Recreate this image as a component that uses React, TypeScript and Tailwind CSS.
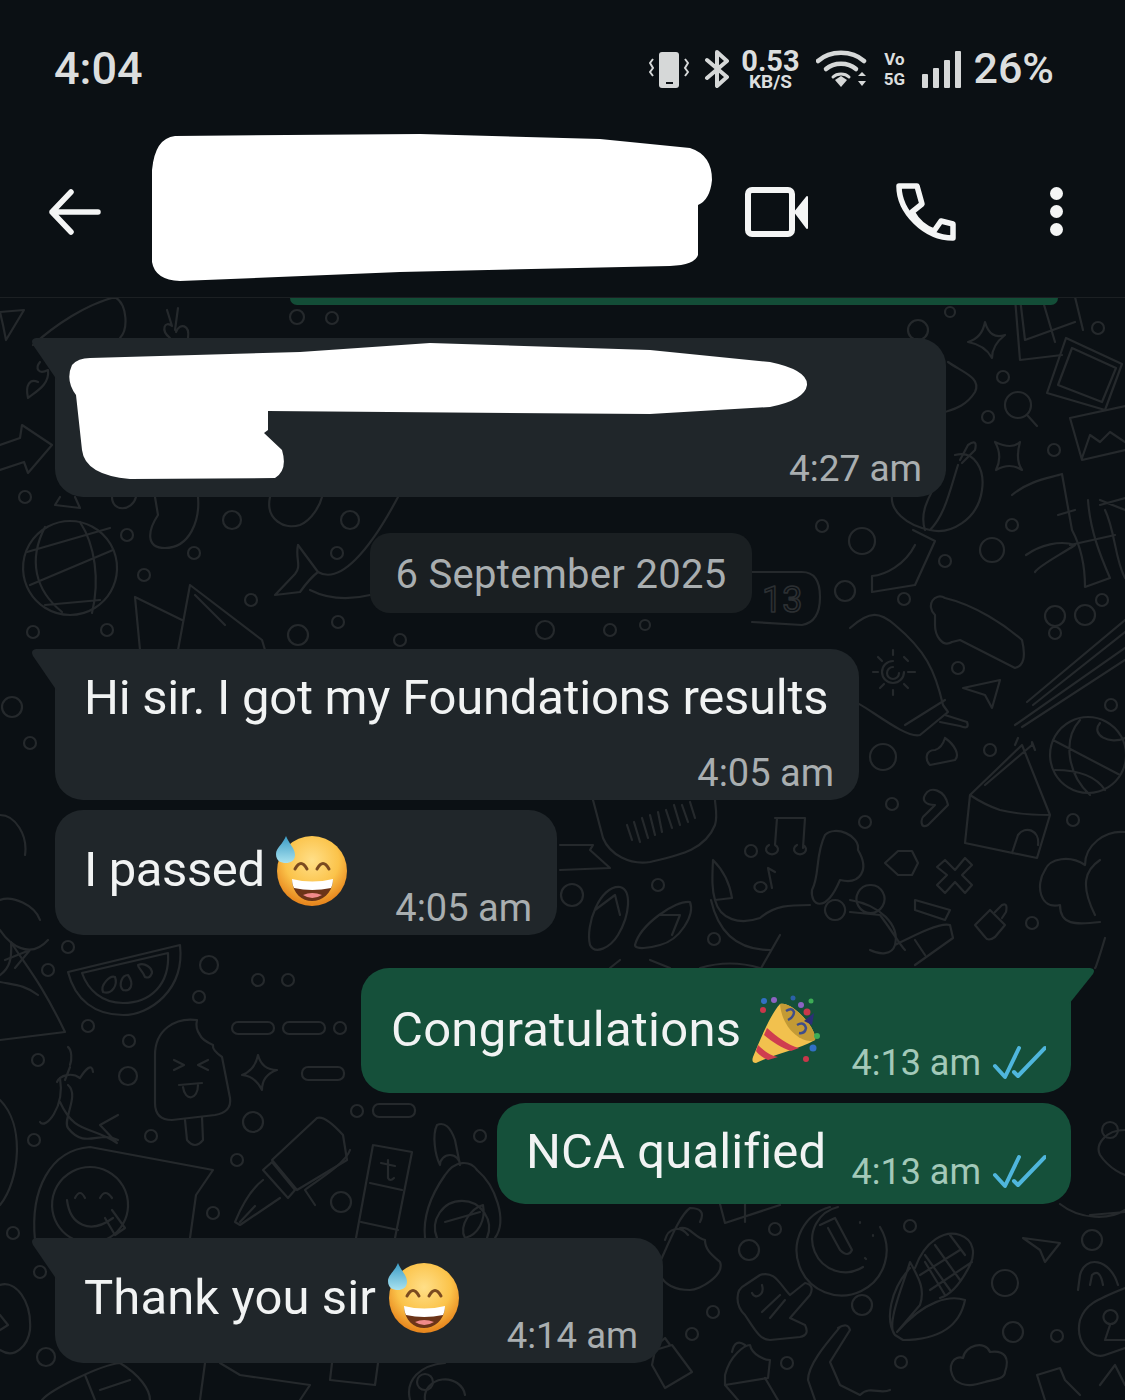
const dots: [number, number, number][] = [
  [297, 317, 7], [332, 318, 6], [25, 497, 6], [232, 520, 9], [127, 535, 6], [194, 553, 6], [350, 520, 9], [337, 553, 6],
  [144, 575, 6], [251, 600, 6], [338, 622, 6], [298, 635, 10], [33, 632, 6], [107, 630, 6], [12, 707, 10], [30, 743, 6],
  [950, 312, 5], [918, 330, 10], [1003, 377, 6], [988, 417, 6], [1098, 328, 6], [1054, 450, 6], [822, 526, 6], [862, 541, 13],
  [1012, 525, 6], [992, 550, 12], [945, 561, 6], [845, 591, 10], [904, 599, 6], [1085, 615, 10], [883, 757, 13], [958, 668, 6],
  [990, 750, 6], [892, 804, 6], [865, 822, 6], [1073, 820, 6], [1032, 923, 6], [1055, 616, 10], [1055, 633, 6], [1111, 705, 6],
  [751, 851, 6], [658, 885, 6], [572, 895, 11], [714, 939, 6], [68, 947, 6], [48, 970, 6], [209, 965, 9], [199, 997, 6],
  [258, 980, 6], [288, 980, 6], [88, 1026, 6], [129, 1041, 6], [38, 1060, 6], [128, 1076, 9], [340, 1028, 6], [151, 1136, 6],
  [34, 1140, 6], [253, 1122, 10], [237, 1160, 6], [213, 1213, 6], [341, 1202, 10], [318, 1250, 6], [749, 1250, 10], [775, 1229, 6],
  [910, 1226, 6], [1005, 1283, 13], [1092, 1240, 10], [1013, 1332, 10], [1057, 1336, 6], [862, 1305, 10], [713, 1312, 6], [692, 1334, 6],
  [787, 1363, 6], [901, 1362, 6], [13, 1233, 6], [40, 1272, 6], [46, 1357, 9], [357, 1111, 6], [480, 1136, 6], [425, 1382, 8],
  [1102, 600, 6], [610, 630, 6], [545, 630, 9], [645, 625, 5], [400, 640, 6], [1000, 980, 5], [1110, 1130, 8],
];

const lines: string[] = [
  // top left
  "M0,312 L24,310 L6,340 L3,325 Z",
  "M33,345 C55,325 85,305 115,297 C128,305 128,330 120,338",
  "M170,338 C160,330 165,320 172,326 L167,310 M175,330 L178,308 M188,338 C190,325 180,322 176,332",
  "M28,398 C35,392 50,385 48,370 C38,375 35,368 40,362 M28,398 C25,385 30,378 38,382",
  "M0,445 L20,438 L22,425 L52,445 L28,473 L24,462 L0,470",
  "M60,497 L55,505 L80,508 L75,497 M112,497 C112,512 132,512 136,497",
  "M155,497 L158,515 C148,530 145,548 165,548 C190,548 200,520 198,497",
  "M270,497 C265,520 285,530 300,525 C312,520 320,505 322,497",
  // globe
  "M70,521 a47,47 0 1,0 0.1,0 Z",
  "M45,527 C28,560 35,590 62,612 M80,522 C95,545 100,580 92,613 M27,552 L110,528 M30,585 L113,550 M45,605 L100,600",
  // tent + whale
  "M135,597 L182,620 M135,597 L140,650 M190,585 L178,650 M190,585 L262,640 L265,650 M195,595 L225,625",
  "M298,545 C295,558 302,566 295,574 L275,595 L300,592 C305,585 310,578 318,572 C340,585 370,550 398,497",
  "M298,545 L318,572 M310,590 C330,600 350,600 370,595",
  // lantern + right top
  "M955,455 C975,450 985,470 982,490 C978,520 950,535 930,530 C905,525 890,510 892,495",
  "M945,470 C925,500 920,515 925,530 M958,465 C950,490 945,515 930,530 M960,460 L968,445 Q978,438 975,450 L962,463",
  "M913,530 L935,541 L915,585 L872,592 L872,576 C885,575 905,565 915,545",
  "M948,362 C962,372 982,378 975,392 C965,408 950,410 945,412",
  "M985,322 Q990,340 1005,335 Q992,345 992,358 Q985,345 968,342 Q982,338 985,322",
  "M1015,298 L1020,360 L1062,355 M1042,298 L1055,342 M1020,298 L1025,340 L1075,322 M1075,297 L1083,330",
  "M1047,393 L1066,338 L1122,364 L1105,410 Z M1058,385 L1072,348 L1116,368 L1102,402 Z",
  "M1070,418 L1125,406 M1070,418 L1082,460 L1125,450 M1082,458 L1090,435 L1100,442 L1110,432 L1125,442",
  "M1018,392 m-13,13 a13,13 0 1,0 26,0 a13,13 0 1,0 -26,0 M1028,416 L1037,426",
  "M995,442 Q1012,450 1020,442 Q1015,460 1022,470 Q1010,462 996,470 Q1003,456 995,442",
  // bamboo
  "M1012,495 C1030,480 1050,478 1062,474 L1072,530 C1080,545 1085,565 1085,587 L1110,578 C1100,555 1090,530 1088,500",
  "M1026,555 C1040,545 1060,540 1075,545 C1060,555 1040,565 1035,572 M1058,515 L1075,510 M1070,545 L1115,535",
  "M1100,505 L1125,498 M1105,510 C1115,530 1115,560 1125,578 M1100,500 L1125,510",
  // middle right
  "M850,628 C870,610 880,612 895,625 C925,650 935,670 943,705 L948,712 L920,735 C905,740 860,700 850,700",
  "M905,725 L945,700 M945,715 L967,722 Q970,730 960,726 L940,722",
  "M893,661 a11,11 0 1,0 11,11 M893,667 a6,6 0 1,0 6,6 M893,650 L893,655 M893,690 L893,695 M873,672 L878,672 M908,672 L915,672 M878,657 L882,661 M904,657 L908,661 M880,688 L884,684 M904,684 L908,688",
  "M963,688 L1000,680 L992,708 L985,695 Z",
  "M935,615 C925,605 935,592 945,598 C975,605 1005,625 1022,640 Q1028,665 1015,668 L960,640 L952,642 C942,648 935,635 935,625 Z",
  "M1027,702 L1125,620 M1033,705 L1125,632 M1015,725 L1125,648 M1022,727 L1125,660",
  "M1088,717 a38,38 0 1,0 0.1,0 Z M1053,740 L1120,775 M1080,720 C1062,740 1068,775 1090,795 M1100,723 C1090,735 1110,745 1125,738 M1055,770 C1075,770 1095,775 1105,790",
  "M945,738 C955,745 960,755 955,760 L930,765 C925,760 925,750 935,750 Q942,748 945,738",
  "M925,795 C930,785 945,790 948,805 L928,825 C920,830 920,818 925,815 L935,805 C925,805 922,800 925,795",
  "M970,795 L1022,745 L1050,815 L1037,858 L965,843 L970,795 M985,785 L1032,745 M1012,853 L1018,835 C1025,825 1040,830 1038,845 M1015,745 L1018,738 M1032,745 L1032,742 L1035,750 M970,795 Q985,805 1000,810 Q1020,815 1050,815",
  "M898,851 L912,851 L918,863 L912,875 L898,875 L885,863 Z",
  "M945,860 L955,870 L965,858 L972,865 L962,875 L972,885 L965,893 L955,882 L945,893 L937,885 L947,875 L937,867 Z",
  "M975,925 L990,910 L1005,925 L995,937 Q988,942 985,937 Z M995,912 L1002,905 Q1008,902 1006,912 L1002,918",
  "M1060,905 C1040,910 1035,885 1045,870 C1050,858 1070,855 1085,865 C1085,845 1105,830 1125,832 M1100,860 C1085,870 1080,885 1095,915 M1060,905 C1060,925 1075,925 1100,922 M1105,938 C1100,955 1095,970 1095,968",
  "M850,900 C880,905 900,925 895,945 C892,955 880,955 870,950 M915,900 L950,910 L945,920 L915,910 Z M895,945 C915,935 940,922 950,925 L953,938 L915,965 M915,940 L925,955",
  // speech bubble + notes
  "M593,800 L603,838 C610,855 630,865 650,862 C680,855 705,850 715,825 C718,815 715,805 715,800 M560,845 L593,845 L590,850 L610,868 L560,870",
  "M627,825 L632,840 M634,822 L640,842 M642,818 L648,838 M650,815 L655,835 M658,812 L662,832 M666,810 L672,828 M674,805 L680,825 M682,805 L688,822 M690,802 L695,818",
  "M590,945 C585,925 600,885 620,887 C632,890 630,915 618,935 C610,948 595,955 590,945 M595,910 L615,895 L620,915",
  "M635,945 C640,925 675,900 690,902 C695,915 680,940 660,945 C650,948 635,950 635,945 M660,915 L680,915 L672,935",
  "M775,818 L805,818 L803,848 M777,818 L775,845 M775,845 a6,5 0 1,1 -6,-0 M803,845 a6,5 0 1,1 -6,-0",
  "M768,868 L772,888 M768,868 L775,872 M760,892 a6,5 0 1,1 1,0",
  "M713,860 C725,872 730,885 732,898 L715,900 C712,890 712,880 713,860 M715,900 C720,920 740,925 760,918 C775,905 790,905 810,905 M711,900 C720,940 745,950 770,950 M780,935 L760,970",
  "M825,835 C835,825 860,835 858,850 C870,870 860,885 840,880 C825,915 810,905 812,890 C820,875 815,855 825,835 M835,900 a10,10 0 1,0 0.1,0 Z M870,885 a14,14 0 1,0 1,0 M850,912 L880,915 C895,935 900,945 905,950",
  "M650,960 L670,968 M610,968 L620,960 M700,968 C720,962 740,962 760,968",
  // left mid
  "M0,815 C15,815 28,835 25,855 M0,900 C12,895 35,905 40,920 M0,930 C10,945 30,960 48,940 M5,960 L30,950 L15,968",
  // watermelon
  "M68,972 L180,945 C185,990 150,1015 123,1015 C95,1015 75,1000 68,972 M82,973 L168,953 C170,985 150,1003 123,1003 C102,1003 88,990 82,973",
  "M103,992 C100,985 110,975 115,977 C118,985 112,995 103,992 M123,990 C118,985 122,975 128,975 C135,985 130,992 123,990 M145,977 C142,970 138,968 138,965 C145,962 152,968 152,973 C150,978 148,978 145,977",
  "M0,975 C10,968 12,958 11,942 C25,965 40,980 65,1032 L0,1040 M0,982 C15,985 25,985 38,995",
  "M197,1020 C175,1017 155,1030 155,1055 L155,1103 Q155,1120 172,1120 L215,1115 Q232,1112 230,1098 L222,1057 Q212,1050 213,1045 Q202,1040 200,1035 Q195,1028 197,1020",
  "M174,1060 L184,1065 L174,1070 M208,1060 L198,1065 L208,1070 M179,1085 L202,1083 M183,1087 C185,1102 198,1100 198,1085 M185,1120 L187,1140 Q195,1150 203,1140 L202,1117",
  "M258,1055 Q262,1070 277,1070 Q262,1075 262,1090 Q255,1076 242,1075 Q255,1070 258,1055",
  "M60,1078 C65,1108 45,1130 40,1122 M68,1085 C80,1095 62,1120 68,1128 C85,1150 100,1130 118,1140 M60,1102 C75,1135 90,1125 117,1143 L100,1125 L118,1115",
  "M68,1047 C72,1050 72,1060 70,1065 M57,1082 C60,1075 72,1072 80,1078 C85,1070 92,1062 93,1072 M70,1067 L65,1080",
  // pen + smiley
  "M272,1160 L317,1118 Q325,1115 343,1135 L347,1160 L297,1190 Z M263,1170 L272,1162 L295,1190 L288,1198 Z",
  "M263,1180 C250,1190 240,1210 235,1222 L240,1225 L280,1198 M240,1222 L255,1206",
  "M90,1167 a38,38 0 1,0 0.1,0 Z M67,1200 C70,1225 90,1235 113,1218 M75,1198 Q80,1188 85,1198 M100,1198 Q105,1188 112,1198 M105,1218 L115,1235 L125,1228 L112,1210",
  "M35,1240 C30,1190 50,1150 90,1147 L213,1170 L196,1195 L190,1238",
  "M0,1100 C25,1125 20,1180 0,1205 M350,1150 C345,1165 310,1185 305,1190 L315,1205",
  // bookmark + compass
  "M373,1145 L412,1152 L395,1238 M373,1145 L356,1238 M370,1183 L402,1190 M361,1222 L398,1230 M388,1160 L388,1178 Q390,1182 394,1178 M381,1163 L395,1166",
  "M440,1165 C435,1155 432,1135 437,1125 Q448,1120 455,1140 L460,1165 a10,10 0 0,0 -20,0",
  "M425,1238 C422,1210 438,1185 445,1175 M495,1238 C508,1220 495,1185 477,1170 M445,1175 C455,1160 470,1160 477,1170 M437,1238 a27,27 0 1,1 50,0 M465,1238 C458,1225 472,1208 483,1205 C486,1220 478,1235 465,1238",
  "M445,1222 L480,1212",
  // bottom left
  "M0,1285 C15,1280 32,1300 30,1330 C28,1345 15,1360 0,1350 M0,1330 L8,1325 L0,1315",
  "M42,1400 C50,1390 100,1365 120,1363 C140,1375 150,1390 150,1400 M85,1375 L95,1400 M100,1390 L130,1380",
  "M205,1363 L200,1400 M220,1363 L240,1375 L310,1385 L300,1400 M332,1363 L330,1380 L375,1385 L378,1363",
  "M410,1400 C405,1380 420,1365 445,1363 M425,1400 a20,18 0 0,1 40,-5",
  // bottom right
  "M660,1262 C670,1240 680,1215 690,1208 C700,1208 705,1212 700,1222 M665,1240 C668,1228 680,1225 688,1235 M680,1228 C690,1226 695,1238 705,1240 C705,1250 712,1255 720,1262 C725,1275 700,1290 690,1290 C675,1290 665,1285 660,1275",
  "M720,1204 L725,1223 L780,1205 M745,1204 L745,1222",
  "M830,1207 a45,45 0 1,0 50,20 M838,1207 a33,33 0 1,0 25,60 M820,1225 L835,1218 L852,1250 Q848,1258 840,1250 L828,1228 M860,1222 L860,1223 M873,1235 L873,1236 M865,1258 L866,1259",
  "M915,1268 C925,1240 945,1230 960,1235 C975,1240 975,1255 970,1265 C960,1285 950,1295 940,1298 M910,1268 C890,1290 885,1320 895,1335 C885,1325 905,1280 910,1262 C920,1280 925,1290 920,1305 L897,1332 M895,1335 L903,1340 C940,1340 960,1325 965,1300 C950,1295 925,1300 897,1332 M935,1245 L960,1280 M925,1255 L950,1290 M950,1235 L965,1255 M920,1275 L960,1250 M930,1290 L972,1262 M945,1295 L925,1262",
  "M1023,1238 L1060,1243 L1045,1262 L1040,1250 Z",
  "M745,1315 C735,1305 735,1290 745,1285 L760,1275 C775,1270 780,1285 790,1295 L805,1283 Q815,1285 810,1295 L790,1318 L805,1325 Q810,1335 800,1337 L770,1340 C760,1340 755,1330 745,1315",
  "M752,1293 C755,1300 765,1295 762,1285 M762,1312 L780,1295 M770,1318 L785,1300",
  "M725,1375 C730,1355 745,1345 750,1345 C752,1355 765,1360 770,1360 L768,1378 L725,1385 Z M725,1385 L738,1400 M765,1378 L778,1400 M745,1345 Q735,1338 732,1352",
  "M840,1327 C825,1345 808,1365 808,1380 L815,1400 M850,1330 Q848,1322 838,1328 M850,1330 L830,1362 L840,1385 L860,1395 C870,1385 880,1395 890,1390",
  "M655,1350 L672,1345 L692,1372 L665,1388 L652,1365 Z M657,1345 L665,1338 L670,1345",
  "M955,1380 C945,1365 955,1355 963,1358 C965,1345 985,1340 990,1352 C1005,1350 1010,1358 1005,1372 C1005,1380 990,1380 985,1382 C975,1385 965,1388 955,1380",
  "M1037,1375 L1060,1368 L1065,1380 L1080,1395 M1037,1375 L1045,1400",
  "M1080,1320 C1085,1305 1095,1300 1125,1288 M1080,1320 C1075,1340 1090,1360 1105,1355 L1125,1348 M1078,1290 L1080,1275 C1085,1255 1110,1258 1118,1285 M1090,1285 L1092,1275 Q1100,1268 1103,1285 M1110,1310 a7,7 0 1,0 1,0 M1110,1325 L1105,1340 L1125,1340",
  "M1125,1130 C1105,1130 1095,1145 1100,1155 C1110,1170 1125,1175 1125,1175 M1060,1204 C1080,1220 1110,1220 1125,1210 M1090,1215 L1125,1212",
  "M1100,1385 L1115,1365 L1125,1385",
];

function Doodles() {
  return (
    <svg
      className="absolute inset-0"
      width="1125"
      height="1102"
      viewBox="0 298 1125 1102"
      fill="none"
      stroke="#25292c"
      strokeWidth="2.2"
      strokeLinecap="round"
      strokeLinejoin="round"
    >
      {dots.map(([x, y, r], i) => (
        <circle key={i} cx={x} cy={y} r={r} />
      ))}
      {lines.map((d, i) => (
        <path key={i} d={d} />
      ))}
      <rect x="232" y="1022" width="42" height="12" rx="6" />
      <rect x="283" y="1022" width="42" height="12" rx="6" />
      <rect x="302" y="1067" width="42" height="13" rx="6" />
      <rect x="373" y="1104" width="42" height="13" rx="6" />
      <path d="M752,572 h50 q18,0 18,25 q0,25 -18,28 l-50,-3" />
      <text x="762" y="612" fontSize="36" fontFamily="Roboto, sans-serif" fill="none" stroke="#2b2f32" strokeWidth="1.6">
        13
      </text>
    </svg>
  );
}

function SweatSmile({ className }: { className?: string }) {
  return (
    <svg className={className} viewBox="0 0 72 70" fill="none">
      <defs>
        <radialGradient id="face" cx="50%" cy="35%" r="62%">
          <stop offset="0%" stopColor="#ffdf88" />
          <stop offset="62%" stopColor="#fbc34a" />
          <stop offset="100%" stopColor="#e8881f" />
        </radialGradient>
        <linearGradient id="drop" x1="0" y1="0" x2="0" y2="1">
          <stop offset="0%" stopColor="#3a9cc6" />
          <stop offset="100%" stopColor="#a9e2ef" />
        </linearGradient>
      </defs>
      <circle cx="36" cy="35" r="35" fill="url(#face)" />
      <path d="M16,44 Q36,49 57,44 C56,58 46,65 36,65 C26,65 17,58 16,44 Z" fill="#6b3418" />
      <path d="M16,43 Q36,48 57,43 C57,47 56,50 55,52 Q36,56 18,52 C17,50 16,47 16,43 Z" fill="#fff" />
      <path d="M27,59 Q36,55 46,59 Q36,65 27,59 Z" fill="#f08a8a" />
      <path d="M19,33 Q25,22 31,33" stroke="#7a4a20" strokeWidth="3" strokeLinecap="round" />
      <path d="M41,33 Q47,22 53,33" stroke="#7a4a20" strokeWidth="3" strokeLinecap="round" />
      <path d="M10,0 C13,8 19,12 19,19 C19,25 14,27 10,27 C5,27 0,25 0,18 C0,12 7,8 10,0 Z" fill="url(#drop)" />
    </svg>
  );
}

function Popper({ className }: { className?: string }) {
  return (
    <svg className={className} viewBox="0 0 70 70" fill="none">
      <path d="M28,9 C40,5 66,35 63,45 C45,55 20,60 4,68 Q-1,68 1,62 C8,45 18,20 28,9 Z" fill="#f2c14e" />
      <path d="M15,33 C25,42 36,50 47,53 L39,56 C30,53 20,47 12,40 Z" fill="#cf3d4f" />
      <path d="M6,50 C12,56 19,61 26,62 L16,65 C11,63 6,59 4,56 Z" fill="#cf3d4f" />
      <path d="M28,9 C40,5 66,35 63,45 C52,50 30,35 28,9 Z" fill="#c39a35" />
      <path d="M34,16 q6,-4 8,1 q0,5 -6,8 M45,30 q7,-4 9,3 q-1,6 -7,5" stroke="#3f4d8a" strokeWidth="2.5" />
      <path d="M52,26 L62,18 L60,30 Z" fill="#2c2e78" />
      <circle cx="12" cy="6" r="3" fill="#3170c4" />
      <circle cx="22" cy="5" r="3" fill="#8c63c2" />
      <circle cx="11" cy="15" r="3" fill="#c9374a" />
      <circle cx="59" cy="6" r="2.5" fill="#3dac56" />
      <circle cx="49" cy="10" r="3" fill="#8c63c2" />
      <circle cx="41" cy="3" r="2.5" fill="#2b61a8" />
      <circle cx="55" cy="17" r="3.5" fill="#c9374a" />
      <circle cx="65" cy="41" r="3" fill="#3dac56" />
      <circle cx="61" cy="53" r="3.5" fill="#3170c4" />
      <circle cx="54" cy="64" r="3" fill="#c9374a" />
    </svg>
  );
}

function Ticks() {
  return (
    <svg className="ml-[11px] h-[38px] w-[54px]" viewBox="0 0 54 38" fill="none" stroke="#4fb6dc" strokeWidth="4">
      <path d="M3,23 L13,34 L27,5" strokeLinecap="round" strokeLinejoin="round" />
      <path d="M22,29 L26,33 L53,5" strokeLinecap="round" strokeLinejoin="round" />
    </svg>
  );
}

function TailLeft({ color = "#20262a" }: { color?: string }) {
  return (
    <svg className="absolute left-[-24px] top-0" width="26" height="42" viewBox="0 0 26 42">
      <path d="M26,0 L5,0 Q-1,1 2,7 L26,42 Z" fill={color} />
    </svg>
  );
}

function StatusBar() {
  return (
    <div className="flex h-[131px] items-center px-[54px] pt-[6px] text-[#dcdede]">
      <span className="text-[45px] font-medium leading-none">4:04</span>
      <div className="ml-auto flex items-center pr-[17px]">
        <svg width="40" height="40" viewBox="0 0 40 40" fill="none">
          <rect x="10" y="3" width="20" height="36" rx="3" fill="#d6d8d8" />
          <rect x="17" y="33" width="7" height="2" fill="#0b1014" />
          <path d="M4,11 L1,15 L4,20 L1,24 L4,28 M36,11 L39,15 L36,20 L39,24 L36,28" stroke="#d6d8d8" strokeWidth="2" transform="translate(0,-1)" />
        </svg>
        <svg className="ml-[15px]" width="26" height="38" viewBox="0 0 26 38" fill="none" stroke="#d6d8d8" strokeWidth="4" strokeLinejoin="round" strokeLinecap="round">
          <path d="M3,10 L23,27 L13,36 L13,2 L23,11 L3,28" />
        </svg>
        <div className="ml-[9px] flex w-[62px] flex-col items-center font-bold">
          <span className="h-[25px] text-[29px] leading-[25px]">0.53</span>
          <span className="text-[19px] leading-[15px]">KB/S</span>
        </div>
        <svg className="ml-[15px]" width="52" height="38" viewBox="0 0 52 38" fill="none" stroke="#d6d8d8" strokeWidth="4.5" strokeLinecap="round">
          <path d="M2,11 C14,0 36,0 48,11" />
          <path d="M10,19 C18,12 32,12 40,19" />
          <path d="M17,27 C21,23 29,23 33,27" strokeWidth="3" />
          <path d="M19,30 L25,26 L31,30 L25,37 Z" fill="#d6d8d8" stroke="none" />
          <path d="M42,26 L46,22 L50,26 Z M42,31 L50,31 L46,36 Z" fill="#d6d8d8" stroke="none" />
        </svg>
        <div className="ml-[15px] flex w-[22px] flex-col items-center font-bold leading-none">
          <span className="text-[17px] leading-[20px]">Vo</span>
          <span className="text-[17px] leading-[20px]">5G</span>
        </div>
        <div className="ml-[17px] flex h-[38px] items-end gap-[5px]">
          <div className="h-[14px] w-[6px] rounded-[1px] bg-[#d6d8d8]" />
          <div className="h-[20px] w-[6px] rounded-[1px] bg-[#d6d8d8]" />
          <div className="h-[28px] w-[6px] rounded-[1px] bg-[#d6d8d8]" />
          <div className="h-[37px] w-[6px] rounded-[1px] bg-[#d6d8d8]" />
        </div>
        <span className="ml-[12px] text-[43px] font-medium leading-none">26%</span>
      </div>
    </div>
  );
}

function Header() {
  return (
    <div className="flex h-[167px] items-center border-b border-[#1c2023] pb-[5px]">
      <svg className="ml-[48px]" width="54" height="48" viewBox="0 0 54 48" fill="none" stroke="#f4f5f5" strokeWidth="5.5" strokeLinecap="round" strokeLinejoin="round">
        <path d="M4,24 L50,24 M23,4 L4,24 L23,44" />
      </svg>
      <svg className="ml-[50px] mt-[-6px]" width="562" height="150" viewBox="152 134 562 150">
        <path
          d="M175,136 L420,134 L600,139 L690,148 Q712,155 712,180 Q710,200 698,205 L698,255 Q695,265 670,266 L400,272 L180,281 Q155,280 152,262 L152,170 Q155,138 175,136 Z"
          fill="#ffffff"
        />
      </svg>
      <svg className="ml-[29px]" width="66" height="54" viewBox="743 185 66 54" fill="none">
        <rect x="748" y="190" width="44" height="44" rx="4" stroke="#f4f5f5" strokeWidth="6" />
        <path d="M795,212 L807,197 L807,228 Z" fill="#f4f5f5" stroke="#f4f5f5" strokeWidth="2" strokeLinejoin="round" />
      </svg>
      <svg className="ml-[86px]" width="62" height="62" viewBox="895 181 62 62" fill="none">
        <path
          d="M899,186 L917,186 L922,204 L912,212 C917,221 925,228 934,231 L941,221 L953,224 L953,238 C925,238 899,212 899,186 Z"
          stroke="#f4f5f5"
          strokeWidth="5.5"
          strokeLinejoin="round"
        />
      </svg>
      <div className="ml-[93px] flex flex-col gap-[5px]">
        <div className="h-[13px] w-[13px] rounded-full bg-[#f4f5f5]" />
        <div className="h-[13px] w-[13px] rounded-full bg-[#f4f5f5]" />
        <div className="h-[13px] w-[13px] rounded-full bg-[#f4f5f5]" />
      </div>
    </div>
  );
}

const msg = "text-[49px] leading-[50px] text-[#f1f3f3]";
const timeOut = "text-[36px] leading-[40px] text-[#a3c9b9]";

export default function App() {
  return (
    <div className="h-[1400px] w-[1125px] overflow-hidden bg-[#0b1014] font-['Roboto',sans-serif]">
      <StatusBar />
      <Header />
      <div className="relative h-[1102px]">
        <Doodles />
        <div className="relative flex flex-col items-start">
          <div className="ml-[290px] h-[7px] w-[768px] rounded-b-[14px] bg-[#134d37]" />

          <div className="relative ml-[55px] mt-[33px] h-[159px] w-[891px] rounded-[28px] rounded-tl-none bg-[#20262a]">
            <TailLeft />
            <svg className="absolute left-[10px] top-0" width="760" height="145" viewBox="65 338 760 145">
              <path
                d="M90,358 L300,352 L430,343 L650,350 L770,362 Q808,370 807,385 Q805,400 770,407 L650,414 L268,411 L268,430 L264,433 L282,450 Q288,470 275,478 L130,479 Q85,475 82,450 L76,395 Q65,380 72,365 Q78,358 90,358 Z"
                fill="#ffffff"
              />
            </svg>
            <div className="absolute bottom-[8px] right-[24px] text-[37px] leading-[40px] text-[#a9aeb0]">4:27 am</div>
          </div>

          <div className="ml-[370px] mt-[36px] flex h-[80px] w-[382px] items-center justify-center rounded-[20px] bg-[#1a1f22] pt-[3px] text-[40px] tracking-[0.3px] text-[#a9aeb0]">
            6 September 2025
          </div>

          <div className="relative ml-[55px] mt-[36px] flex h-[151px] w-[804px] flex-col rounded-[28px] rounded-tl-none bg-[#20262a] pl-[29px] pr-[25px] pt-[24px]">
            <TailLeft />
            <div className={`${msg} tracking-[-0.25px]`}>Hi sir. I got my Foundations results</div>
            <div className="mt-[30px] self-end text-[38px] leading-[40px] text-[#a9aeb0]">4:05 am</div>
          </div>

          <div className="ml-[55px] mt-[10px] flex h-[125px] w-[502px] items-start rounded-[28px] bg-[#20262a] pl-[29px] pr-[25px] pt-[35px]">
            <div className={`${msg} tracking-[-0.4px]`}>I passed</div>
            <SweatSmile className="ml-[11px] mt-[-9px] h-[70px] w-[72px]" />
            <div className="ml-auto mt-[43px] text-[38px] leading-[40px] text-[#a9aeb0]">4:05 am</div>
          </div>

          <div className="relative ml-[361px] mt-[33px] flex h-[125px] w-[710px] items-start rounded-[28px] rounded-tr-none bg-[#15503a] pl-[30px] pr-[25px] pt-[37px]">
            <svg className="absolute right-[-24px] top-0" width="26" height="36" viewBox="0 0 26 36">
              <path d="M0,0 L21,0 Q27,1 24,6 L0,36 Z" fill="#15503a" />
            </svg>
            <div className={`${msg} tracking-[0.25px]`}>Congratulations</div>
            <Popper className="ml-[11px] mt-[-10px] h-[70px] w-[70px]" />
            <div className="ml-auto mt-[38px] flex items-start">
              <div className={timeOut}>4:13 am</div>
              <Ticks />
            </div>
          </div>

          <div className="ml-[497px] mt-[10px] flex h-[101px] w-[574px] items-start rounded-[28px] bg-[#15503a] pl-[29px] pr-[25px] pt-[24px]">
            <div className={`${msg} tracking-[0.1px]`}>NCA qualified</div>
            <div className="ml-auto mt-[25px] flex items-start">
              <div className={timeOut}>4:13 am</div>
              <Ticks />
            </div>
          </div>

          <div className="relative ml-[55px] mt-[34px] flex h-[125px] w-[608px] items-start rounded-[28px] rounded-tl-none bg-[#20262a] pl-[29px] pr-[25px] pt-[35px]">
            <TailLeft />
            <div className={`${msg} tracking-[0.1px]`}>Thank you sir</div>
            <SweatSmile className="ml-[12px] mt-[-10px] h-[70px] w-[72px]" />
            <div className="ml-auto mt-[43px] text-[36.5px] leading-[40px] text-[#a9aeb0]">4:14 am</div>
          </div>
        </div>
      </div>
    </div>
  );
}
